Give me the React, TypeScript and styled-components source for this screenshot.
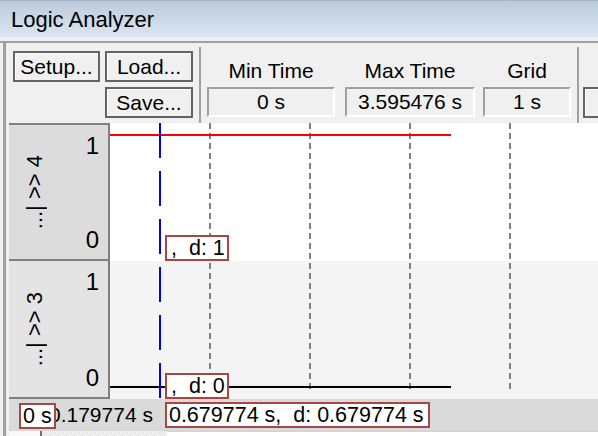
import React from "react";
import styled, { createGlobalStyle } from "styled-components";

const Global = createGlobalStyle`
  html, body { margin: 0; padding: 0; background: #f0f0f0; }
  body { font-family: "Liberation Sans", Arial, sans-serif; }
`;

const Window = styled.div`
  width: 598px;
  height: 436px;
  overflow: hidden;
  background: #f0f0f0;
  display: flex;
  flex-direction: column;
  font-family: "Liberation Sans", Arial, sans-serif;
  color: #000;
`;

const TitleBar = styled.div`
  flex: none;
  height: 37px;
  box-sizing: border-box;
  border-top: 1px solid #aab6c2;
  background: linear-gradient(#bccbdb, #dae6f2);
  padding: 1px 0 0 11px;
  font-size: 22px;
  line-height: 35px;
`;

const Frame = styled.div`
  flex: 1;
  min-height: 0;
  margin-top: 4px;
  border-top: 2px solid #a0a0a0;
  display: flex;
`;

const Body = styled.div`
  flex: 1;
  min-width: 0;
  margin-left: 3px;
  border-left: 3px solid #a0a0a0;
  padding-left: 3px;
  display: flex;
  flex-direction: column;
`;

const Toolbar = styled.div`
  flex: none;
  height: 80px;
  box-sizing: border-box;
  padding-top: 4px;
  display: flex;
  align-items: stretch;
  white-space: nowrap;
`;

const ButtonGrid = styled.div`
  flex: none;
  display: grid;
  grid-template-columns: 87px 88px;
  grid-template-rows: 31px 31px;
  gap: 5px;
  margin: 4px 6px 0 4px;
  align-self: flex-start;
`;

const Btn = styled.button<{ $col?: number; $row?: number; $w?: number }>`
  grid-column: ${(p) => p.$col ?? "auto"};
  grid-row: ${(p) => p.$row ?? "auto"};
  ${(p) => (p.$w ? `width: ${p.$w}px;` : "")}
  flex: none;
  height: 31px;
  box-sizing: border-box;
  margin: 0;
  padding: 0;
  border: 2px solid #646464;
  background: #f0f0f0;
  box-shadow: inset 1px 1px 0 #fdfdfd;
  display: flex;
  align-items: center;
  justify-content: center;
  font-family: inherit;
  font-size: 21px;
  color: #000;
`;

const Sep = styled.div<{ $ml: number }>`
  flex: none;
  width: 2px;
  margin-left: ${(p) => p.$ml}px;
  background: #a0a0a0;
`;

const Field = styled.div<{ $w: number; $ml: number }>`
  flex: none;
  width: ${(p) => p.$w}px;
  margin-left: ${(p) => p.$ml}px;
  display: flex;
  flex-direction: column;
  align-items: center;
`;

const FieldLabel = styled.div`
  margin-top: 12px;
  height: 24px;
  line-height: 24px;
  font-size: 21px;
`;

const ValueBox = styled.div`
  margin-top: 4px;
  align-self: stretch;
  height: 30px;
  box-sizing: border-box;
  border: 2px solid;
  border-color: #a0a0a0 #ffffff #ffffff #a0a0a0;
  text-align: center;
  line-height: 26px;
  font-size: 21px;
`;

const ZoomRow = styled.div`
  flex: none;
  margin: 40px 0 0 4px;
  display: flex;
  align-self: flex-start;
  gap: 5px;
`;

const Channels = styled.div`
  flex: none;
  display: flex;
  flex-direction: column;
`;

const Channel = styled.div`
  height: 138px;
  display: flex;
`;

const LabelCell = styled.div<{ $first?: boolean; $bg: string }>`
  flex: none;
  width: 101px;
  box-sizing: border-box;
  background: ${(p) => p.$bg};
  border-right: 2px solid #808080;
  border-bottom: 2px solid #808080;
  border-top: ${(p) => (p.$first ? "2px solid #808080" : "none")};
  display: flex;
`;

const RotLabel = styled.div`
  writing-mode: vertical-rl;
  transform: rotate(180deg);
  font-size: 22px;
  line-height: 25px;
  white-space: pre;
  margin-left: 13px;
  align-self: center;
`;

const Levels = styled.div`
  margin-left: auto;
  padding: 9px 9px 7px 0;
  display: flex;
  flex-direction: column;
  justify-content: space-between;
  align-items: flex-end;
  font-size: 24px;
  line-height: 24px;
`;

const WaveCell = styled.div<{ $bg: string }>`
  flex: 1;
  min-width: 0;
  position: relative;
  background: ${(p) => p.$bg};
`;

const WaveSvg = styled.svg`
  display: block;
  width: 100%;
  height: 100%;
`;

const Tag = styled.div`
  flex: none;
  box-sizing: border-box;
  height: 26px;
  border: 2px solid #a84646;
  background: #ffffff;
  font-size: 21.5px;
  line-height: 22px;
  white-space: pre;
  padding: 0 4px 0 2px;
  overflow: hidden;
`;

const CursorTag = styled(Tag)`
  position: absolute;
  left: 55px;
  bottom: 0;
  width: 64px;
  padding-left: 4px;
`;

const StatusBar = styled.div`
  flex: none;
  height: 32px;
  position: relative;
  background: #dadada;
  display: flex;
  align-items: center;
  padding-left: 40px;
  font-size: 21px;
  white-space: pre;
`;

const TimeText = styled.span`
  flex: none;
`;

const MainTag = styled(Tag)`
  margin-left: 12px;
`;

const StartTag = styled(Tag)`
  position: absolute;
  left: 10px;
  top: 4px;
  width: 37px;
  padding: 0 0 0 2px;
`;

const ScrollStrip = styled.div`
  flex: none;
  height: 5px;
  display: flex;
`;

const ThumbBox = styled.div`
  flex: none;
  width: 31px;
  background: #fafafa;
  border-right: 2px solid #707070;
`;

const Checker = styled.div`
  flex: none;
  width: 123px;
  background: repeating-conic-gradient(#ffffff 0 25%, #dcdcdc 0 50%) 0 0 / 2px 2px;
`;

const Track = styled.div`
  flex: 1;
  background: #ffffff;
  border-top: 1px solid #d0d0d0;
  margin-left: 2px;
`;

type WaveProps = { levelY: number; color: string; offset: number; gridEnd: number };

function Wave({ levelY, color, offset, gridEnd }: WaveProps) {
  return (
    <WaveSvg>
      {[100, 200, 300, 400].map((x) => (
        <line
          key={x}
          x1={x}
          x2={x}
          y1={0}
          y2={gridEnd}
          stroke="#808080"
          strokeWidth={2}
          strokeDasharray="6 4"
          strokeDashoffset={offset}
        />
      ))}
      <line x1={0} x2={341} y1={levelY} y2={levelY} stroke={color} strokeWidth={2} />
      <line
        x1={50}
        x2={50}
        y1={0}
        y2={138}
        stroke="#0000ff"
        strokeWidth={2}
        strokeDasharray="35 13"
        strokeDashoffset={offset}
      />
    </WaveSvg>
  );
}

export default function App() {
  return (
    <>
      <Global />
      <Window>
        <TitleBar>Logic Analyzer</TitleBar>
        <Frame>
          <Body>
            <Toolbar>
              <ButtonGrid>
                <Btn $col={1} $row={1}>Setup...</Btn>
                <Btn $col={2} $row={1}>Load...</Btn>
                <Btn $col={2} $row={2}>Save...</Btn>
              </ButtonGrid>
              <Sep $ml={0} />
              <Field $w={128} $ml={6}>
                <FieldLabel>Min Time</FieldLabel>
                <ValueBox>0 s</ValueBox>
              </Field>
              <Field $w={130} $ml={10}>
                <FieldLabel>Max Time</FieldLabel>
                <ValueBox>3.595476 s</ValueBox>
              </Field>
              <Field $w={88} $ml={8}>
                <FieldLabel>Grid</FieldLabel>
                <ValueBox>1 s</ValueBox>
              </Field>
              <Sep $ml={6} />
              <ZoomRow>
                <Btn $w={46}>In</Btn>
              </ZoomRow>
            </Toolbar>
            <Channels>
              <Channel>
                <LabelCell $first $bg="#dcdcdc">
                  <RotLabel>{"...| >> 4"}</RotLabel>
                  <Levels>
                    <span>1</span>
                    <span>0</span>
                  </Levels>
                </LabelCell>
                <WaveCell $bg="#ffffff">
                  <Wave levelY={12} color="#ff0000" offset={0} gridEnd={138} />
                  <CursorTag>{",  d: 1"}</CursorTag>
                </WaveCell>
              </Channel>
              <Channel>
                <LabelCell $bg="#e4e4e4">
                  <RotLabel>{"...| >> 3"}</RotLabel>
                  <Levels>
                    <span>1</span>
                    <span>0</span>
                  </Levels>
                </LabelCell>
                <WaveCell $bg="#f4f4f4">
                  <Wave levelY={126} color="#000000" offset={138} gridEnd={132} />
                  <CursorTag>{",  d: 0"}</CursorTag>
                </WaveCell>
              </Channel>
            </Channels>
            <StatusBar>
              <TimeText>0.179774 s</TimeText>
              <MainTag>{"0.679774 s,  d: 0.679774 s"}</MainTag>
              <StartTag>0 s</StartTag>
            </StatusBar>
            <ScrollStrip>
              <ThumbBox />
              <Checker />
              <Track />
            </ScrollStrip>
          </Body>
        </Frame>
      </Window>
    </>
  );
}
